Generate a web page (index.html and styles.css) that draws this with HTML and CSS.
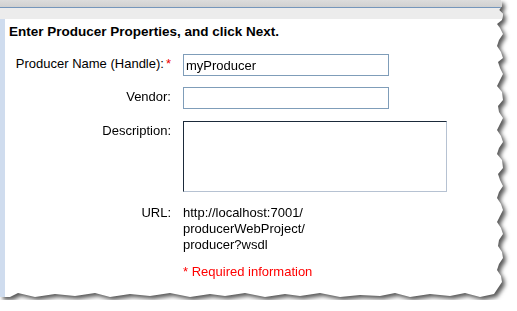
FILE: index.html
```html
<!DOCTYPE html>
<html lang="en">
<head>
    <meta charset="UTF-8">
    <title>Producer Properties</title>
    <link rel="stylesheet" href="styles.css">
</head>
<body>
    <div class="sheet">
        <div class="paper">
            <div class="titlebar"></div>
            <div class="band"></div>
            <div class="main">
                <div class="rail"></div>
                <div class="content">
                    <h1 class="intro">Enter Producer Properties, and click Next.</h1>
                    <div class="form">
                        <label class="lbl">Producer Name (Handle):<span class="req">*</span></label>
                        <div class="field"><input class="text" type="text" value="myProducer"></div>

                        <label class="lbl">Vendor:</label>
                        <div class="field"><input class="text" type="text" value=""></div>

                        <label class="lbl lbl-desc">Description:</label>
                        <div class="field"><textarea class="area"></textarea></div>

                        <label class="lbl lbl-url">URL:</label>
                        <div class="field url">http://localhost:7001/<br>producerWebProject/<br>producer?wsdl</div>

                        <div></div>
                        <div class="field note">* Required information</div>
                    </div>
                </div>
            </div>
        </div>
    </div>
</body>
</html>
```

FILE: styles.css
```css
body {
    margin: 0;
    background: #fff;
    font-family: 'Liberation Sans', Arial, sans-serif;
    color: #000;
}
.sheet {
    width: 506px;
    height: 300px;
    filter: drop-shadow(3px 3px 2px rgba(0, 0, 0, 0.65));
}
.paper {
    width: 506px;
    height: 300px;
    background: #fff;
    display: flex;
    flex-direction: column;
    clip-path: polygon(0 0, 501px 0, 502px 6px, 499px 10px, 503px 14px, 502px 20px, 497px 24px, 500px 28px, 503px 34px, 499px 40px, 497px 46px, 501px 52px, 503px 58px, 498px 62px, 500px 68px, 503px 74px, 500px 80px, 497px 86px, 502px 92px, 503px 100px, 498px 106px, 499px 112px, 503px 118px, 500px 124px, 497px 130px, 501px 136px, 503px 142px, 499px 148px, 497px 154px, 502px 160px, 503px 168px, 498px 174px, 500px 180px, 503px 186px, 499px 192px, 497px 198px, 501px 204px, 503px 210px, 500px 216px, 497px 222px, 501px 228px, 503px 234px, 499px 240px, 498px 246px, 502px 252px, 503px 258px, 499px 264px, 497px 270px, 501px 276px, 502px 282px, 498px 288px, 494px 294px, 480px 297px, 465px 293px, 450px 296px, 430px 294px, 410px 297px, 395px 293px, 380px 296px, 360px 295px, 340px 297px, 320px 293px, 300px 296px, 285px 294px, 265px 297px, 245px 293px, 225px 296px, 210px 294px, 190px 297px, 170px 293px, 150px 296px, 130px 294px, 110px 297px, 95px 293px, 75px 296px, 55px 294px, 35px 297px, 18px 293px, 10px 297px, 0 297px);
}
.titlebar {
    height: 7px;
    background: linear-gradient(#dcdcdc, #d0d0d0);
    border-bottom: 1px solid #7596bb;
}
.band {
    height: 11px;
    background: #ececec;
}
.main {
    flex: 1;
    display: flex;
}
.rail {
    width: 5px;
    background: #cfdcee;
}
.content {
    flex: 1;
    padding: 5px 0 0 4px;
}
.intro {
    margin: 0 0 14px;
    font-size: 13.5px;
    line-height: 16px;
    font-weight: bold;
}
.form {
    display: grid;
    grid-template-columns: 166px 1fr;
    column-gap: 12px;
    row-gap: 11px;
    margin-left: -4px;
}
.lbl {
    text-align: right;
    font-size: 13px;
    line-height: 14px;
    padding-top: 3px;
}
.lbl-desc { padding-top: 4px; }
.lbl-url { padding-top: 2px; }
.req { color: #e00; margin-left: 2px; }
.field {
    font-size: 13px;
    line-height: 16px;
}
.text {
    display: block;
    box-sizing: border-box;
    width: 206px;
    height: 22px;
    margin: 0;
    padding: 0 2px;
    border: 1px solid #7f9db9;
    font-family: 'Liberation Sans', Arial, sans-serif;
    font-size: 13px;
    color: #000;
    outline: none;
}
.area {
    display: block;
    box-sizing: border-box;
    width: 264px;
    height: 71px;
    margin: 1px 0;
    padding: 0;
    border: 1px solid;
    border-color: #1b2a3a #b6c2d2 #b6c2d2 #1b2a3a;
    resize: none;
    outline: none;
}
.url { margin-top: 1px; }
.note {
    color: #f00;
    margin-top: 0;
}
```
